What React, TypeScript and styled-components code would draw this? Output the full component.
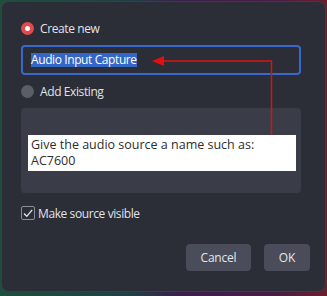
import React from "react";
import styled, { createGlobalStyle } from "styled-components";

const Global = createGlobalStyle`
  html, body { margin: 0; padding: 0; }
  body {
    width: 327px;
    height: 296px;
    overflow: hidden;
    background: linear-gradient(90deg, #1d4f3c 0%, #1f3f45 40%, #3a1f4a 55%, #4a1c45 85%, #6a1f2a 100%);
    font-family: "Open Sans", "Noto Sans", sans-serif;
  }
`;

const Dialog = styled.div`
  position: relative;
  box-sizing: border-box;
  margin: 1px 1px 0 1px;
  width: 325px;
  height: 291px;
  background: #2b2d37;
  border: 1px solid #3a3d47;
  border-radius: 8px;
  padding: 0 24px 0 19px;
  display: flex;
  flex-direction: column;
`;

const RadioRow = styled.label<{ $top: number }>`
  display: flex;
  align-items: center;
  gap: 6px;
  margin-top: ${(p) => p.$top}px;
  height: 14px;
  color: #e1e3e8;
  font-size: 12px;
  letter-spacing: -0.4px;
`;

const Radio = styled.span<{ $on?: boolean }>`
  box-sizing: border-box;
  width: 13px;
  height: 13px;
  border-radius: 50%;
  background: ${(p) => (p.$on ? "#e5494d" : "#5b5e67")};
  display: flex;
  align-items: center;
  justify-content: center;
  &::after {
    content: "";
    width: 5px;
    height: 5px;
    border-radius: 50%;
    background: ${(p) => (p.$on ? "#fff" : "transparent")};
  }
`;

const Input = styled.div`
  box-sizing: border-box;
  margin-top: 10px;
  height: 30px;
  border: 2px solid #3a67cc;
  border-radius: 4px;
  padding-left: 8px;
  display: flex;
  align-items: center;
  font-size: 12px;
  letter-spacing: -0.4px;
`;

const Selected = styled.span`
  background: #3466c6;
  color: #ffffff;
  line-height: 14px;
`;

const ListBox = styled.div`
  margin-top: 10px;
  height: 85px;
  background: #3a3d48;
  border-radius: 4px;
`;

const CheckRow = styled.label`
  display: flex;
  align-items: center;
  gap: 3px;
  margin-top: 13px;
  height: 14px;
  color: #e1e3e8;
  font-size: 12px;
  letter-spacing: -0.4px;
`;

const Box = styled.span`
  box-sizing: border-box;
  width: 14px;
  height: 14px;
  border: 1px solid #8b8e96;
  border-radius: 2px;
  display: flex;
  align-items: center;
  justify-content: center;
`;

const Buttons = styled.div`
  display: flex;
  justify-content: flex-end;
  gap: 13px;
  margin-top: 24px;
  margin-right: -9px;
`;

const Button = styled.button<{ $w: number }>`
  width: ${(p) => p.$w}px;
  height: 27px;
  border: none;
  border-radius: 4px;
  background: #4a4d59;
  color: #e4e6ea;
  font-family: "Open Sans", "Noto Sans", sans-serif;
  font-size: 12px;
  letter-spacing: -0.2px;
  padding: 0;
`;

const Tooltip = styled.div`
  position: absolute;
  left: 26px;
  top: 133px;
  width: 268px;
  height: 36px;
  box-sizing: border-box;
  background: #ffffff;
  color: #2d2d2d;
  font-size: 12.5px;
  line-height: 16px;
  padding: 2px 3px;
`;

const Annotation = styled.svg`
  position: absolute;
  left: -1px;
  top: -1px;
  pointer-events: none;
`;

export default function App() {
  return (
    <>
      <Global />
      <Dialog>
        <RadioRow $top={19}>
          <Radio $on />
          Create new
        </RadioRow>
        <Input>
          <Selected>Audio Input Capture</Selected>
        </Input>
        <RadioRow $top={9}>
          <Radio />
          Add Existing
        </RadioRow>
        <ListBox />
        <CheckRow>
          <Box>
            <svg width="12" height="12" viewBox="0 0 12 12">
              <path d="M2 6.5 L4.8 9.3 L10.2 2.8" fill="none" stroke="#e6e8ec" strokeWidth="1.3" />
            </svg>
          </Box>
          Make source visible
        </CheckRow>
        <Buttons>
          <Button $w={65}>Cancel</Button>
          <Button $w={46}>OK</Button>
        </Buttons>
        <Tooltip>
          Give the audio source a name such as:
          <br />
          AC7600
        </Tooltip>
        <Annotation width="327" height="296" viewBox="0 0 327 296">
          <line x1="160" y1="60" x2="271" y2="60" stroke="#e01010" strokeWidth="1.5" />
          <line x1="270.5" y1="60" x2="270.5" y2="134" stroke="#e01010" strokeWidth="1.5" />
          <polygon points="151,60 163,55 163,65" fill="#e01010" />
        </Annotation>
      </Dialog>
    </>
  );
}
